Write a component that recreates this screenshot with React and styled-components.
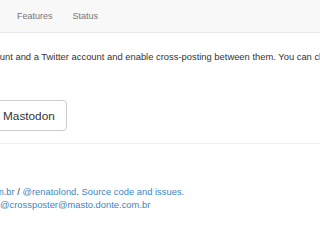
import React from "react";
import styled, { createGlobalStyle } from "styled-components";

const Global = createGlobalStyle`
  html, body {
    margin: 0;
    padding: 0;
    background: #fff;
    overflow: hidden;
  }
  body {
    font-family: "Liberation Sans", Arial, sans-serif;
    font-size: 9.4px;
    color: #333;
  }
`;

const App = () => {
  return (
    <Page>
      <Global />
      <Navbar>
        <NavLink href="#features">Features</NavLink>
        <NavLink href="#status">Status</NavLink>
      </Navbar>
      <Main>
        <Intro>
          account and a Twitter account and enable cross-posting between them. You can choose what gets posted.
        </Intro>
        <Actions>
          <Button>Mastodon</Button>
        </Actions>
        <Rule />
        <Footer>
          <FootLine $shift>
            <Link href="#">com.br</Link> / <Link href="#">@renatolond</Link>.{" "}
            <Link href="#">Source code and issues.</Link>
          </FootLine>
          <FootLine>
            <Link href="#">@crossposter@masto.donte.com.br</Link>
          </FootLine>
        </Footer>
      </Main>
    </Page>
  );
};
export default App;

const Page = styled.div`
  width: 320px;
  height: 240px;
  overflow: hidden;
`;
const Navbar = styled.nav`
  height: 32px;
  background-color: #f8f8f8;
  border-bottom: 1px solid #e7e7e7;
  display: flex;
  align-items: center;
  padding-left: 7px;
`;
const NavLink = styled.a`
  padding: 0 10px;
  color: #777;
  text-decoration: none;
  font-size: 9px;
`;
const Main = styled.div`
  display: flex;
  flex-direction: column;
`;
const Intro = styled.p`
  margin: 17px 0 0 -20px;
  line-height: 13px;
  white-space: nowrap;
`;
const Actions = styled.div`
  margin-top: 37px;
  display: flex;
`;
const Button = styled.button`
  margin-left: -9px;
  height: 31px;
  padding: 0 11px 0 11px;
  border: 1px solid #ccc;
  border-radius: 4px;
  background: #fff;
  color: #333;
  font-family: "Liberation Sans", Arial, sans-serif;
  font-size: 11.8px;
`;
const Rule = styled.hr`
  margin: 12px 0 0;
  border: 0;
  border-top: 1px solid #eee;
`;
const Footer = styled.footer`
  margin-top: 42px;
  display: flex;
  flex-direction: column;
`;
const FootLine = styled.div`
  line-height: 12.5px;
  white-space: nowrap;
  margin-left: ${(p) => (p.$shift ? "-14px" : "0")};
`;
const Link = styled.a`
  color: #3b86c4;
  text-decoration: none;
`;
